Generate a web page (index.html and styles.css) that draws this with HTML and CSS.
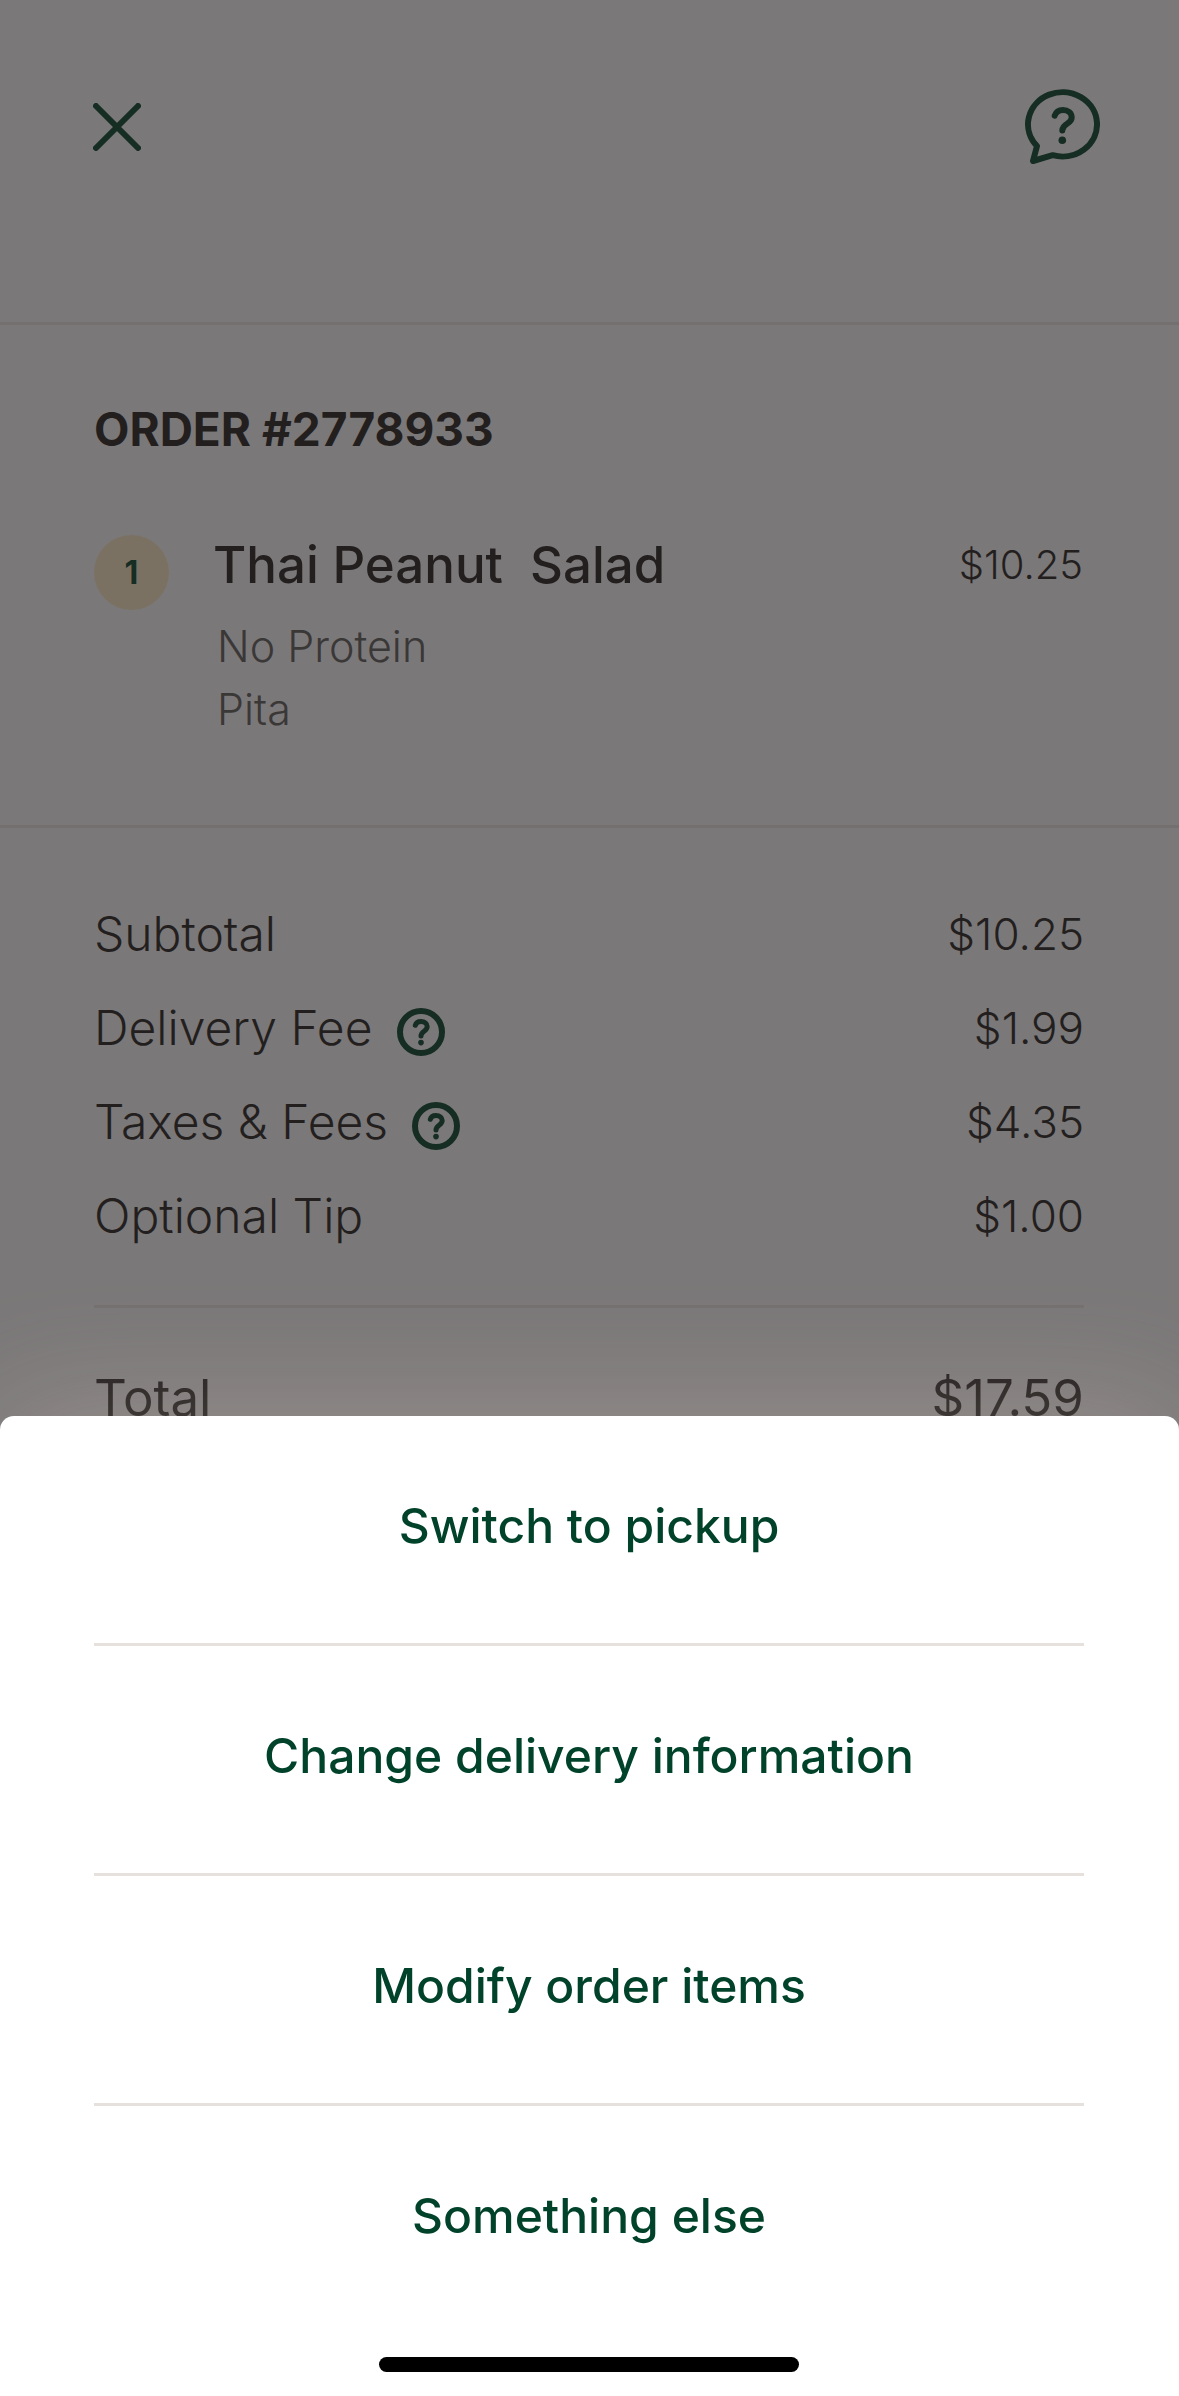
FILE: index.html
```
<!DOCTYPE html>
<html lang="en">
<head>
  <meta charset="UTF-8">
  <meta name="viewport" content="width=device-width, initial-scale=1.0">
  <title>Order Details</title>
  <link rel="stylesheet" href="styles.css">
</head>
<body>
  <header class="top-bar">
    <button class="icon-btn" aria-label="Close">
      <svg width="48" height="48" viewBox="0 0 48 48">
        <path d="M3 3 L45 45 M45 3 L3 45"/>
      </svg>
    </button>
    <button class="icon-btn" aria-label="Help">
      <svg width="75" height="75" viewBox="0 0 75 75">
        <path d="M12 57 A34.5 32.2 0 1 1 27.7 66.2 L8 72 Z"/>
        <path d="M29.7 26.7 C31 22.6 34 21 38 21 C43 21 46.7 24 46.7 28.5 C46.7 35.5 37.3 34 37.3 41.5"/>
        <circle class="dot" cx="37.3" cy="51.3" r="3.8"/>
      </svg>
    </button>
  </header>

  <main>
    <section class="order">
      <h1>ORDER #2778933</h1>
      <div class="item">
        <span class="qty">1</span>
        <div class="item-info">
          <h2>Thai Peanut&nbsp; Salad</h2>
          <ul>
            <li>No Protein</li>
            <li>Pita</li>
          </ul>
        </div>
        <span class="item-price">$10.25</span>
      </div>
    </section>

    <section class="summary">
      <dl class="fees">
        <div class="row">
          <dt>Subtotal</dt>
          <dd>$10.25</dd>
        </div>
        <div class="row">
          <dt>Delivery Fee
            <button class="icon-btn" aria-label="About the delivery fee">
              <svg width="48" height="48" viewBox="0 0 48 48">
                <circle cx="24" cy="24" r="21"/>
                <path class="mark" d="M18.3 17.3 C19 14.5 21 13.5 24 13.5 C27.6 13.5 30.2 15.5 30.2 18.5 C30.2 23.5 24 23 24 28"/>
                <circle class="dot" cx="24" cy="34.6" r="2.8"/>
              </svg>
            </button>
          </dt>
          <dd>$1.99</dd>
        </div>
        <div class="row">
          <dt>Taxes &amp; Fees
            <button class="icon-btn" aria-label="About taxes and fees">
              <svg width="48" height="48" viewBox="0 0 48 48">
                <circle cx="24" cy="24" r="21"/>
                <path class="mark" d="M18.3 17.3 C19 14.5 21 13.5 24 13.5 C27.6 13.5 30.2 15.5 30.2 18.5 C30.2 23.5 24 23 24 28"/>
                <circle class="dot" cx="24" cy="34.6" r="2.8"/>
              </svg>
            </button>
          </dt>
          <dd>$4.35</dd>
        </div>
        <div class="row">
          <dt>Optional Tip</dt>
          <dd>$1.00</dd>
        </div>
      </dl>
      <dl class="total">
        <div class="row">
          <dt>Total</dt>
          <dd>$17.59</dd>
        </div>
      </dl>
    </section>
  </main>

  <!-- Bottom sheet -->
  <div class="overlay">
    <div class="sheet" role="dialog" aria-label="Change order">
      <div class="actions">
        <button>Switch to pickup</button>
        <button>Change delivery information</button>
        <button>Modify order items</button>
        <button>Something else</button>
      </div>
      <div class="home-bar"></div>
    </div>
  </div>
</body>
</html>
```
FILE: styles.css
```
* {
  box-sizing: border-box;
}

body {
  margin: 0;
  min-height: 100vh;
  background-color: #fffcff;
  color: #231f20;
  font-family: Inter, "Liberation Sans", sans-serif;
  font-size: 44px;
  font-weight: 300;
  line-height: 60px;
}

h1, h2, ul, dl, dd {
  margin: 0;
  padding: 0;
}

button {
  padding: 0;
  border: none;
  background: none;
  font: inherit;
  cursor: pointer;
}

/* Icons */
.icon-btn {
  display: flex;
}

svg {
  fill: none;
  stroke: #00422a;
  stroke-width: 6;
  stroke-linecap: round;
  stroke-linejoin: round;
}

svg .mark {
  stroke-width: 5;
}

svg .dot {
  fill: #00422a;
  stroke: none;
}

/* Header */
.top-bar {
  display: flex;
  justify-content: space-between;
  align-items: center;
  padding: 89px 79px 158px 93px;
}

/* Order */
.order {
  padding: 74px 96px 84px 94px;
  border-top: 3px solid #ede9e9;
  border-bottom: 3px solid #ede9e9;
}

h1 {
  margin-bottom: 76px;
  font-size: 46px;
  font-weight: 700;
}

.item {
  display: flex;
  align-items: flex-start;
}

.qty {
  display: flex;
  justify-content: center;
  align-items: center;
  width: 75px;
  height: 75px;
  margin-right: 44px;
  border-radius: 50%;
  background-color: #ffecc8;
  color: #00422a;
  font-size: 32px;
  font-weight: 700;
}

.item-info {
  flex: 1;
}

h2 {
  font-size: 51px;
  font-weight: 500;
}

.item-info ul {
  margin-top: 20px;
  padding-left: 4px;
  list-style: none;
  color: #5c5a5a;
  font-size: 43px;
  line-height: 63px;
}

.item-price {
  font-size: 40px;
}

/* Summary */
.summary {
  padding: 59px 95px 59px 94px;
}

.row {
  display: flex;
  justify-content: space-between;
  align-items: center;
  height: 94px;
}

dt {
  display: flex;
  align-items: center;
  gap: 24px;
  font-size: 48px;
}

dt .icon-btn {
  padding-top: 8px;
}

.total {
  margin-top: 42px;
  padding-top: 43px;
  border-top: 3px solid #ede9e9;
  font-weight: 400;
}

.total dt,
.total dd {
  font-size: 51px;
}

/* Bottom sheet */
.overlay {
  position: fixed;
  inset: 0;
  display: flex;
  flex-direction: column;
  justify-content: flex-end;
  background-color: rgba(35, 31, 32, 0.6);
}

.sheet {
  padding: 0 95px 24px 94px;
  border-radius: 14px 14px 0 0;
  background-color: #fff;
  box-shadow: 0 0 130px rgba(255, 235, 215, 0.24);
}

.actions {
  display: flex;
  flex-direction: column;
}

.actions button {
  padding: 80px 0 87px;
  color: #00422a;
  font-size: 48px;
  font-weight: 500;
}

.actions button + button {
  border-top: 3px solid #e6e1dc;
}

.home-bar {
  width: 420px;
  height: 15px;
  margin: 24px auto 0;
  border-radius: 8px;
  background-color: #000;
}
```
